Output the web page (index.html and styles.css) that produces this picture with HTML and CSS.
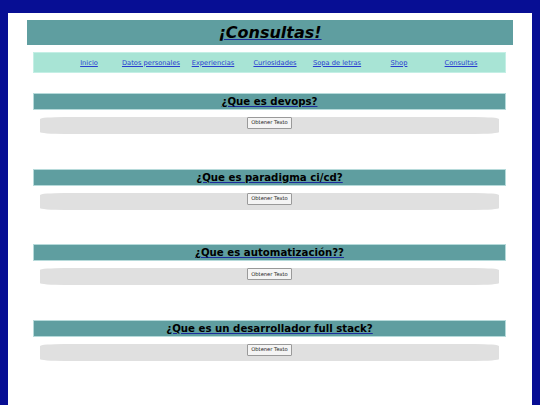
FILE: index.html
```html
<!DOCTYPE html>
<html lang="es">
<head>
<meta charset="utf-8">
<title>Consultas</title>
<link rel="stylesheet" href="styles.css">
</head>
<body>
<div class="page">
  <header class="title-bar">
    <h1 class="title"><a href="#">¡Consultas!</a></h1>
  </header>
  <nav class="nav">
    <a href="#">Inicio</a>
    <a href="#">Datos personales</a>
    <a href="#">Experiencias</a>
    <a href="#">Curiosidades</a>
    <a href="#">Sopa de letras</a>
    <a href="#">Shop</a>
    <a href="#">Consultas</a>
  </nav>
  <main class="sections">
    <section class="qa">
      <h2 class="qa-title"><a href="#">¿Que es devops?</a></h2>
      <div class="qa-box"><button class="btn">Obtener Texto</button></div>
    </section>
    <section class="qa">
      <h2 class="qa-title"><a href="#">¿Que es paradigma ci/cd?</a></h2>
      <div class="qa-box"><button class="btn">Obtener Texto</button></div>
    </section>
    <section class="qa">
      <h2 class="qa-title"><a href="#">¿Que es automatización??</a></h2>
      <div class="qa-box"><button class="btn">Obtener Texto</button></div>
    </section>
    <section class="qa">
      <h2 class="qa-title"><a href="#">¿Que es un desarrollador full stack?</a></h2>
      <div class="qa-box"><button class="btn">Obtener Texto</button></div>
    </section>
  </main>
</div>
</body>
</html>
```
FILE: styles.css
```css
html, body {
  margin: 0;
  padding: 0;
  height: 100%;
}
body {
  background: #070e94;
  font-family: "DejaVu Sans", Verdana, sans-serif;
  padding: 13px 8px 0 8px;
  box-sizing: border-box;
}
.page {
  background: #ffffff;
  min-height: 392px;
  padding: 7px 19px 20px 19px;
  box-sizing: border-box;
}
.title-bar {
  background: #5f9ea0;
  height: 25px;
  display: flex;
  align-items: center;
  justify-content: center;
}
.title {
  margin: 0;
  font-size: 16px;
  font-weight: bold;
  font-style: italic;
  line-height: 1;
}
.title a {
  color: #000000;
  text-decoration: underline;
  text-decoration-color: #1c2a9c;
}
.nav {
  margin: 7px 7px 0 6px;
  height: 21px;
  background: #a8e4d5;
  border: 1px solid #c4efe5;
  box-sizing: border-box;
  display: grid;
  grid-template-columns: repeat(7, 62px);
  padding-left: 24px;
  align-items: center;
}
.nav a {
  color: #2a3cd0;
  font-size: 6.7px;
  text-align: center;
  text-decoration: underline;
  white-space: nowrap;
}
.sections {
  margin: 20px 7px 0 6px;
  display: flex;
  flex-direction: column;
  gap: 34.6px;
}
.qa {
  display: flex;
  flex-direction: column;
  gap: 7px;
}
.qa-title {
  margin: 0;
  height: 17px;
  background: #5f9ea0;
  border: 1px solid #b6dada;
  box-sizing: border-box;
  font-size: 10.2px;
  font-weight: bold;
  line-height: 15px;
  text-align: center;
}
.qa-title a {
  color: #000000;
  text-decoration: underline;
  text-decoration-color: #1c2a9c;
}
.qa-box {
  margin: 0 7px 0 7px;
  height: 17px;
  background: #e0e0e0;
  border-radius: 24px / 2px;
  display: flex;
  justify-content: center;
  align-items: flex-start;
}
.btn {
  font-family: "DejaVu Sans", Verdana, sans-serif;
  font-size: 5.2px;
  height: 12px;
  padding: 0 3px;
  margin: 0;
  background: #f4f4f4;
  border: 1px solid #9a9a9a;
  border-radius: 1px;
  color: #222222;
  line-height: 1;
}
```
